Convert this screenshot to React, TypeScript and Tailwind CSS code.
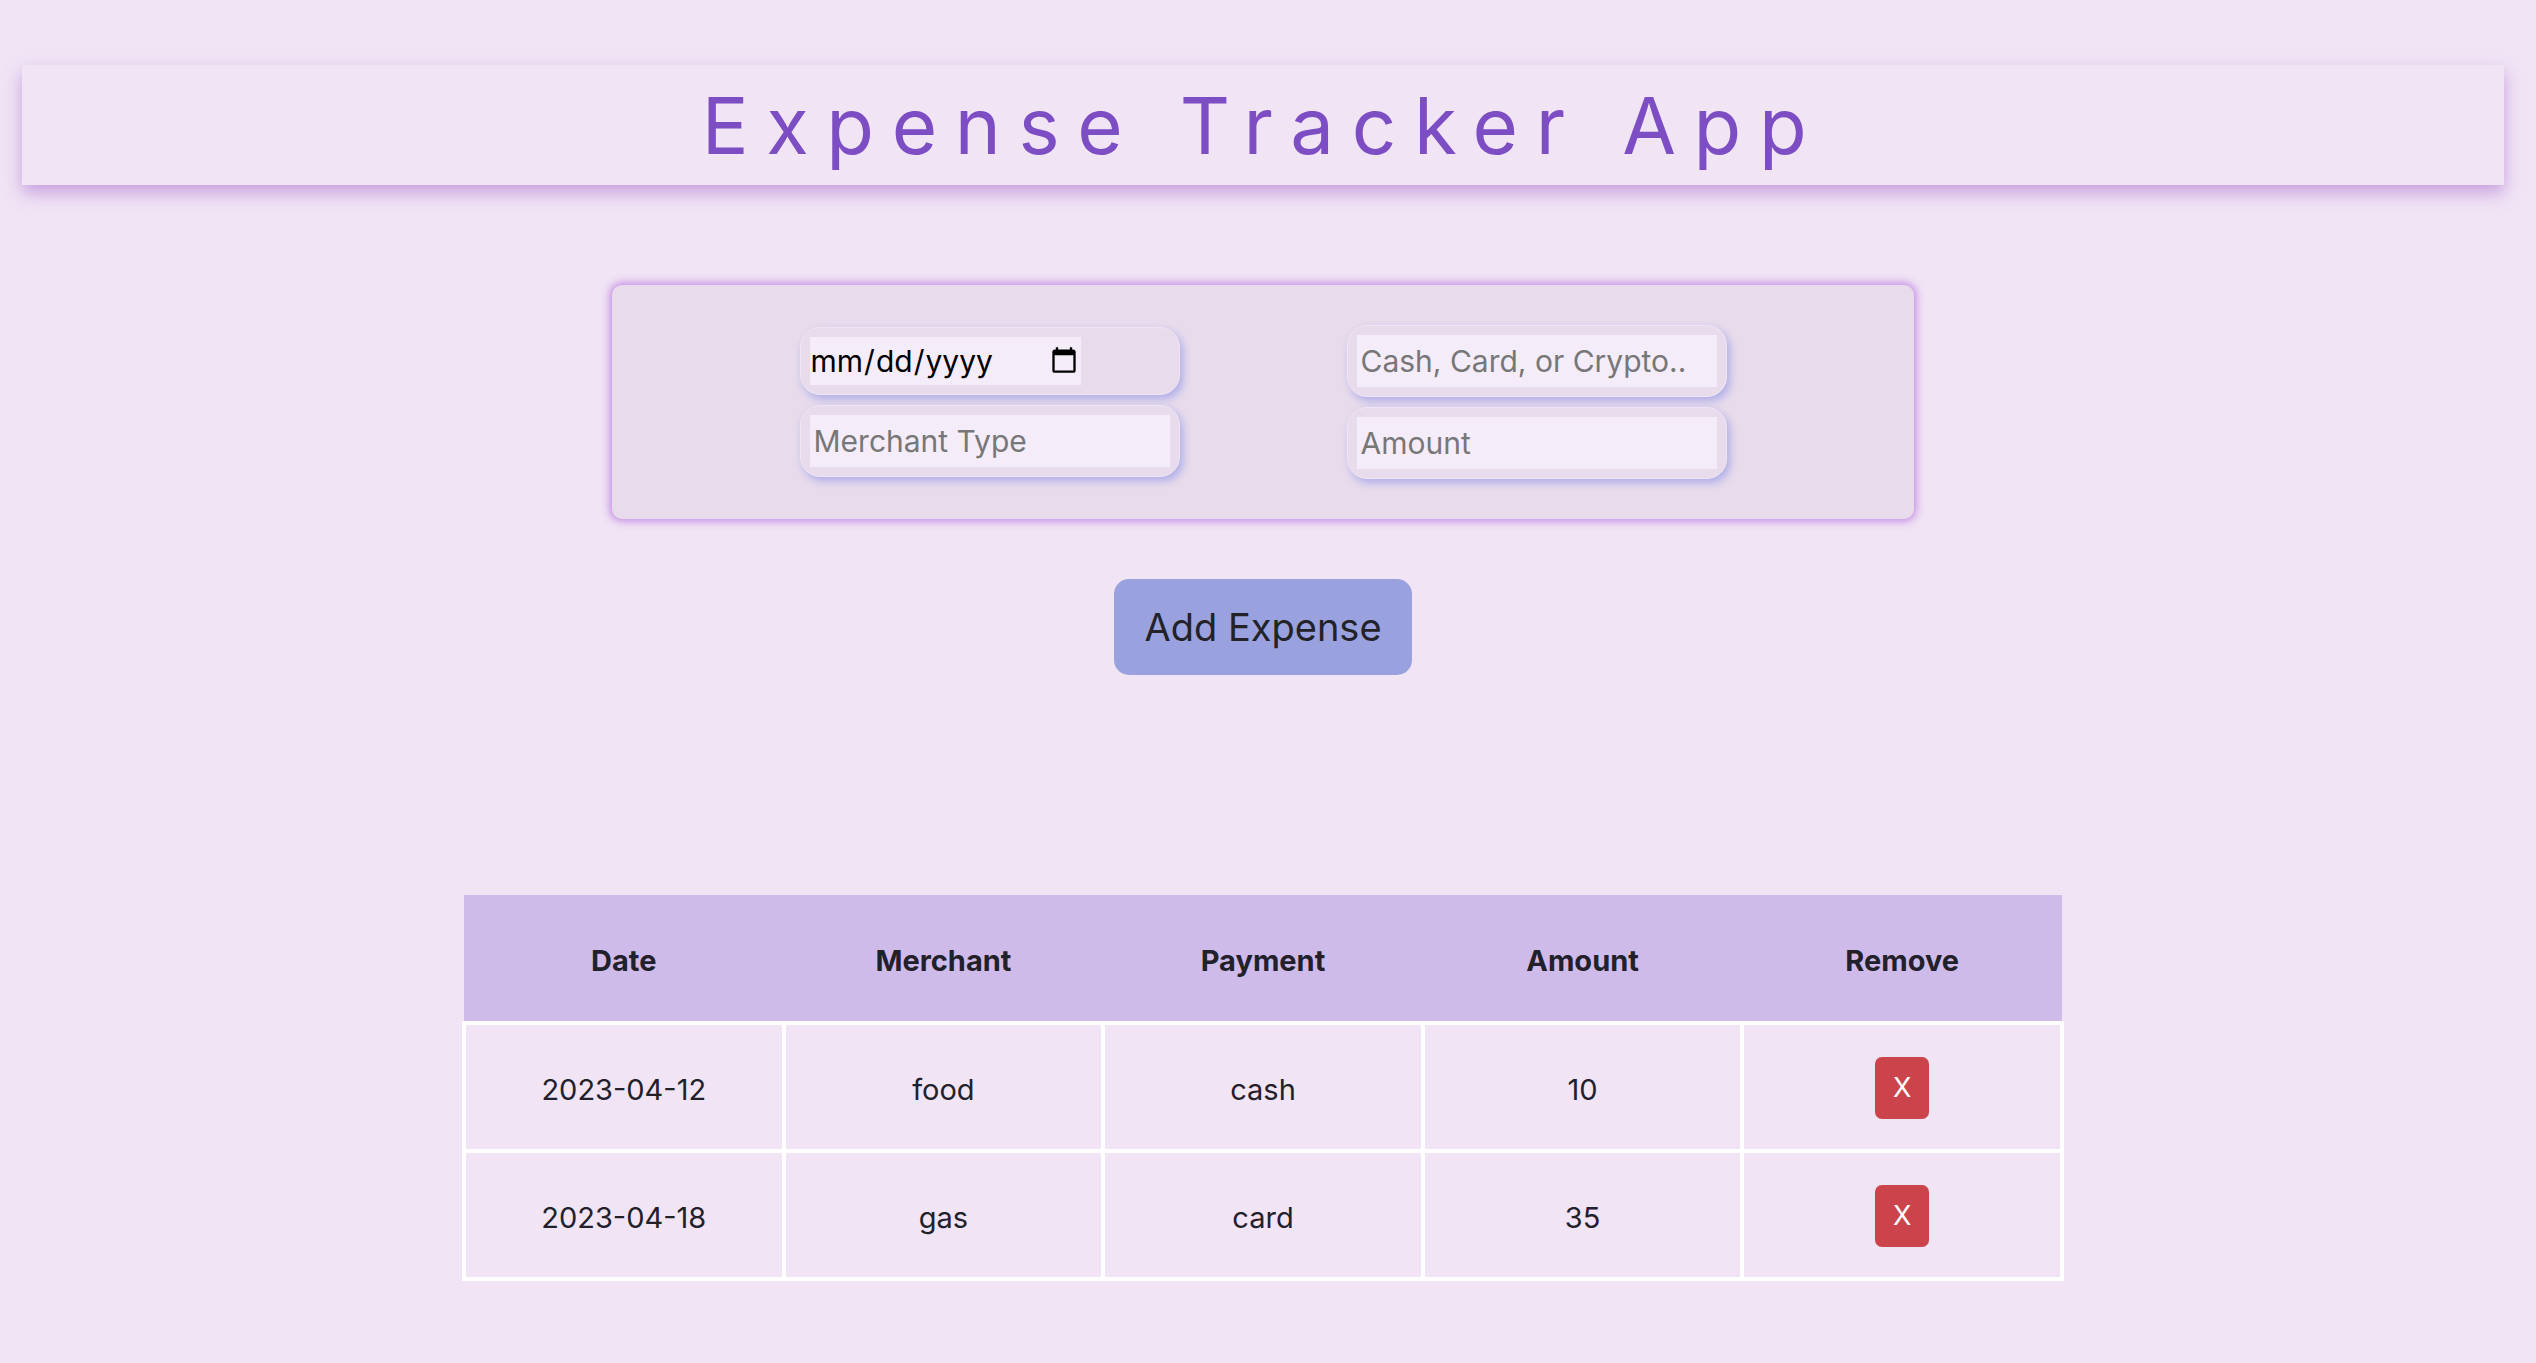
import { useState } from 'react';

type Expense = {
  id: number;
  date: string;
  merchant: string;
  payment: string;
  amount: string;
};

const font = { fontFamily: '"Inter", "Noto Sans", "Liberation Sans", sans-serif' };

export default function App() {
  const [expenses, setExpenses] = useState<Expense[]>([
    { id: 1, date: '2023-04-12', merchant: 'food', payment: 'cash', amount: '10' },
    { id: 2, date: '2023-04-18', merchant: 'gas', payment: 'card', amount: '35' }
  ]);
  const [form, setForm] = useState({ date: '', merchant: '', payment: '', amount: '' });

  const addExpense = () => {
    if (!form.date || !form.merchant || !form.payment || !form.amount) return;
    setExpenses(prev => [...prev, { id: Date.now(), ...form }]);
    setForm({ date: '', merchant: '', payment: '', amount: '' });
  };

  const removeExpense = (id: number) => {
    setExpenses(prev => prev.filter(e => e.id !== id));
  };

  const fieldWrap =
    'w-[380px] rounded-[20px] bg-[#e8dcec] border border-[#efe5f3] p-[9px] shadow-[3px_4px_8px_rgba(125,135,230,0.55)]';
  const fieldInput =
    'h-[52px] w-full bg-[#f5ecfa] px-[4px] text-[30px] text-black outline-none placeholder:text-[#777]';

  return (
    <div className="min-h-screen bg-[#f1e4f5] pt-[65px] pr-[10px] pb-[80px]" style={font}>
      {/* Header */}
      <header className="mx-[22px] flex h-[120px] items-center justify-center bg-[#f1e4f5] shadow-[0_8px_16px_rgba(165,105,205,0.55)]">
        <h1 className="text-[78px] font-normal tracking-[17.6px] text-[#7c4dc3]">Expense Tracker App</h1>
      </header>

      {/* Form */}
      <div className="mx-auto mt-[100px] flex h-[234px] w-[1302px] items-center justify-center gap-[167px] rounded-[10px] bg-[#e8dcec] shadow-[0_0_8px_2px_rgba(180,110,222,0.8)]">
        <div className="flex flex-col gap-[10px]">
          <div className={`${fieldWrap} h-[68px]`}>
            <input
              type="date"
              value={form.date}
              onChange={e => setForm({ ...form, date: e.target.value })}
              className="h-[48px] w-[271px] bg-[#f5ecfa] text-[30px] text-black outline-none"
            />
          </div>
          <div className={`${fieldWrap} h-[72px]`}>
            <input
              placeholder="Merchant Type"
              value={form.merchant}
              onChange={e => setForm({ ...form, merchant: e.target.value })}
              className={fieldInput}
            />
          </div>
        </div>
        <div className="flex flex-col gap-[10px]">
          <div className={`${fieldWrap} h-[72px]`}>
            <input
              placeholder="Cash, Card, or Crypto.."
              value={form.payment}
              onChange={e => setForm({ ...form, payment: e.target.value })}
              className={fieldInput}
            />
          </div>
          <div className={`${fieldWrap} h-[72px]`}>
            <input
              placeholder="Amount"
              value={form.amount}
              onChange={e => setForm({ ...form, amount: e.target.value })}
              className={fieldInput}
            />
          </div>
        </div>
      </div>

      <div className="mt-[60px] flex justify-center">
        <button
          onClick={addExpense}
          className="h-[96px] w-[298px] rounded-[15px] bg-[#99a2df] text-[38px] text-[#222228]"
        >
          Add Expense
        </button>
      </div>

      {/* Table */}
      <table className="mx-auto mt-[220px] w-[1602px] table-fixed border-collapse text-[29px] text-[#22212b]">
        <thead>
          <tr className="bg-[#cfbbe9]">
            {['Date', 'Merchant', 'Payment', 'Amount', 'Remove'].map(h => (
              <th key={h} className="h-[128px] pt-[6px] font-bold">
                {h}
              </th>
            ))}
          </tr>
        </thead>
        <tbody>
          {expenses.map(e => (
            <tr key={e.id}>
              <td className="h-[128px] border-4 border-white pt-[6px] text-center">{e.date}</td>
              <td className="h-[128px] border-4 border-white pt-[6px] text-center">{e.merchant}</td>
              <td className="h-[128px] border-4 border-white pt-[6px] text-center">{e.payment}</td>
              <td className="h-[128px] border-4 border-white pt-[6px] text-center">{e.amount}</td>
              <td className="h-[128px] border-4 border-white pt-[2px] text-center">
                <button
                  onClick={() => removeExpense(e.id)}
                  className="h-[62px] w-[54px] rounded-[7px] bg-[#cc444b] text-[27px] text-white"
                >
                  X
                </button>
              </td>
            </tr>
          ))}
        </tbody>
      </table>
    </div>
  );
}
